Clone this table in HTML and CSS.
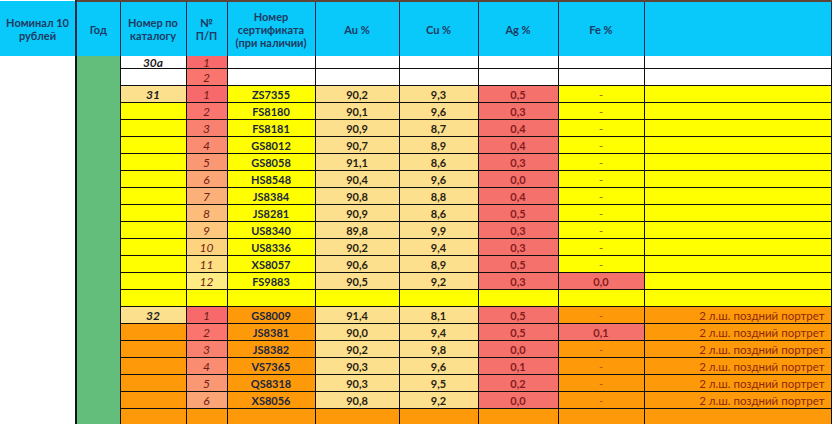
FILE: index.html
```html
<!DOCTYPE html>
<html lang="ru">
<head>
<meta charset="utf-8">
<title>Номинал 10 рублей</title>
<link rel="stylesheet" href="styles.css">
</head>
<body>
<table class="sheet">
  <colgroup>
    <col class="c-nom"><col class="c-year"><col class="c-cat"><col class="c-no"><col class="c-cert">
    <col class="c-au"><col class="c-cu"><col class="c-ag"><col class="c-fe"><col class="c-note">
  </colgroup>
  <thead>
    <tr class="head">
      <th class="h-first">Номинал 10<br>рублей</th>
      <th>Год</th>
      <th>Номер по<br>каталогу</th>
      <th>№<br>П/П</th>
      <th>Номер<br>сертификата<br>(при наличии)</th>
      <th>Au %</th>
      <th>Cu %</th>
      <th>Ag %</th>
      <th>Fe %</th>
      <th></th>
    </tr>
  </thead>
  <tbody>
    <tr class="r-short">
      <td class="blank" rowspan="22"></td>
      <td class="green" rowspan="22"></td>
      <td class="cat w">30a</td>
      <td class="no" style="background:#F8696B">1</td>
      <td class="w"></td><td class="w"></td><td class="w"></td><td class="w"></td><td class="w"></td><td class="w"></td>
    </tr>
    <tr>
      <td class="cat w"></td>
      <td class="no" style="background:#F9756D">2</td>
      <td class="w"></td><td class="w"></td><td class="w"></td><td class="w"></td><td class="w"></td><td class="w"></td>
    </tr>
    <tr>
      <td class="cat p">31</td><td class="no" style="background:#F8696B">1</td>
      <td class="cert y">ZS7355</td><td class="num p">90,2</td><td class="num p">9,3</td><td class="ag r">0,5</td><td class="fe y">-</td><td class="y"></td>
    </tr>
    <tr>
      <td class="cat y"></td><td class="no" style="background:#F9756D">2</td>
      <td class="cert y">FS8180</td><td class="num p">90,1</td><td class="num p">9,6</td><td class="ag r">0,3</td><td class="fe y">-</td><td class="y"></td>
    </tr>
    <tr>
      <td class="cat y"></td><td class="no" style="background:#F9816F">3</td>
      <td class="cert y">FS8181</td><td class="num p">90,9</td><td class="num p">8,7</td><td class="ag r">0,4</td><td class="fe y">-</td><td class="y"></td>
    </tr>
    <tr>
      <td class="cat y"></td><td class="no" style="background:#FA8C72">4</td>
      <td class="cert y">GS8012</td><td class="num p">90,7</td><td class="num p">8,9</td><td class="ag r">0,4</td><td class="fe y">-</td><td class="y"></td>
    </tr>
    <tr>
      <td class="cat y"></td><td class="no" style="background:#FB9874">5</td>
      <td class="cert y">GS8058</td><td class="num p">91,1</td><td class="num p">8,6</td><td class="ag r">0,3</td><td class="fe y">-</td><td class="y"></td>
    </tr>
    <tr>
      <td class="cat y"></td><td class="no" style="background:#FBA476">6</td>
      <td class="cert y">HS8548</td><td class="num p">90,4</td><td class="num p">9,6</td><td class="ag r">0,0</td><td class="fe y">-</td><td class="y"></td>
    </tr>
    <tr>
      <td class="cat y"></td><td class="no" style="background:#FCB079">7</td>
      <td class="cert y">JS8384</td><td class="num p">90,8</td><td class="num p">8,8</td><td class="ag r">0,4</td><td class="fe y">-</td><td class="y"></td>
    </tr>
    <tr>
      <td class="cat y"></td><td class="no" style="background:#FCBC7B">8</td>
      <td class="cert y">JS8281</td><td class="num p">90,9</td><td class="num p">8,6</td><td class="ag r">0,5</td><td class="fe y">-</td><td class="y"></td>
    </tr>
    <tr>
      <td class="cat y"></td><td class="no" style="background:#FDC87D">9</td>
      <td class="cert y">US8340</td><td class="num p">89,8</td><td class="num p">9,9</td><td class="ag r">0,3</td><td class="fe y">-</td><td class="y"></td>
    </tr>
    <tr>
      <td class="cat y"></td><td class="no" style="background:#FED37F">10</td>
      <td class="cert y">US8336</td><td class="num p">90,2</td><td class="num p">9,4</td><td class="ag r">0,3</td><td class="fe y">-</td><td class="y"></td>
    </tr>
    <tr>
      <td class="cat y"></td><td class="no" style="background:#FEDF82">11</td>
      <td class="cert y">XS8057</td><td class="num p">90,6</td><td class="num p">8,9</td><td class="ag r">0,5</td><td class="fe y">-</td><td class="y"></td>
    </tr>
    <tr>
      <td class="cat y"></td><td class="no" style="background:#FFEB84">12</td>
      <td class="cert y">FS9883</td><td class="num p">90,5</td><td class="num p">9,2</td><td class="ag r">0,3</td><td class="ag r">0,0</td><td class="y"></td>
    </tr>
    <tr>
      <td class="y"></td><td class="y"></td><td class="y"></td><td class="y"></td><td class="y"></td><td class="y"></td><td class="y"></td><td class="y"></td>
    </tr>
    <tr>
      <td class="cat p">32</td><td class="no" style="background:#F8696B">1</td>
      <td class="cert o">GS8009</td><td class="num p">91,4</td><td class="num p">8,1</td><td class="ag r">0,5</td><td class="fe o">-</td><td class="note o">2 л.ш. поздний портрет</td>
    </tr>
    <tr>
      <td class="cat o"></td><td class="no" style="background:#F9756D">2</td>
      <td class="cert o">JS8381</td><td class="num p">90,0</td><td class="num p">9,4</td><td class="ag r">0,5</td><td class="ag r">0,1</td><td class="note o">2 л.ш. поздний портрет</td>
    </tr>
    <tr>
      <td class="cat o"></td><td class="no" style="background:#F9816F">3</td>
      <td class="cert o">JS8382</td><td class="num p">90,2</td><td class="num p">9,8</td><td class="ag r">0,0</td><td class="fe o">-</td><td class="note o">2 л.ш. поздний портрет</td>
    </tr>
    <tr>
      <td class="cat o"></td><td class="no" style="background:#FA8C72">4</td>
      <td class="cert o">VS7365</td><td class="num p">90,3</td><td class="num p">9,6</td><td class="ag r">0,1</td><td class="fe o">-</td><td class="note o">2 л.ш. поздний портрет</td>
    </tr>
    <tr>
      <td class="cat o"></td><td class="no" style="background:#FB9874">5</td>
      <td class="cert o">QS8318</td><td class="num p">90,3</td><td class="num p">9,5</td><td class="ag r">0,2</td><td class="fe o">-</td><td class="note o">2 л.ш. поздний портрет</td>
    </tr>
    <tr>
      <td class="cat o"></td><td class="no" style="background:#FBA476">6</td>
      <td class="cert o">XS8056</td><td class="num p">90,8</td><td class="num p">9,2</td><td class="ag r">0,0</td><td class="fe o">-</td><td class="note o">2 л.ш. поздний портрет</td>
    </tr>
    <tr>
      <td class="o"></td><td class="o"></td><td class="o"></td><td class="o"></td><td class="o"></td><td class="o"></td><td class="o"></td><td class="o"></td>
    </tr>
  </tbody>
</table>
</body>
</html>
```

FILE: styles.css
```css
html, body {
  margin: 0;
  padding: 0;
  background: #ffffff;
  overflow: hidden;
  height: 424px;
}

.sheet {
  border-collapse: collapse;
  table-layout: fixed;
  width: 831px;
  font-family: Lato, "Open Sans", sans-serif;
  font-size: 11px;
  line-height: 13px;
}

.c-nom { width: 76px; }
.c-year { width: 44px; }
.c-cat { width: 66px; }
.c-no { width: 41px; }
.c-cert { width: 88px; }
.c-au { width: 84px; }
.c-cu { width: 79px; }
.c-ag { width: 80px; }
.c-fe { width: 86px; }
.c-note { width: 187px; }

.head th {
  height: 54px;
  padding: 0;
  background: #08c9fa;
  color: #1f3a62;
  font-weight: 700;
  text-align: center;
  vertical-align: middle;
  border-left: 1px solid #1c2a48;
  border-right: 1px solid #1c2a48;
  border-top: 2px solid #5e4434;
}

.head th.h-first {
  border-top: none;
  border-left: none;
  border-right: 2px solid #1c2a48;
}

tbody td {
  height: 16px;
  padding: 0 2px;
  border: 1px solid #101010;
  text-align: center;
  vertical-align: middle;
  white-space: nowrap;
  overflow: hidden;
}

tbody tr.r-short td { height: 12px; border-top: none; line-height: 11px; }

tbody td.blank {
  border: none;
  border-right: 2px solid #141414;
  background: #ffffff;
}

tbody td.green {
  background: #63be7b;
  border-left: 1px solid #101010;
  border-right: 1px solid #101010;
}

.w { background: #ffffff; }
.y { background: #ffff00; }
.o { background: #fe9a0a; }
.p { background: #fde08d; }
.r { background: #f5716c; }

.cat {
  font-style: italic;
  font-weight: 700;
  font-size: 12px;
  color: #1d1d1d;
}

.no {
  font-style: italic;
  font-size: 12px;
  color: #6e1f16;
}

.cert {
  font-weight: 700;
  color: #1a2640;
}

.num {
  font-weight: 700;
  color: #2a2212;
}

.ag {
  font-weight: 700;
  color: #861c1c;
}

.fe {
  color: #a0561a;
}

.note {
  text-align: right;
  color: #8e2808;
  padding-right: 6px;
  font-size: 11.5px;
}
```
